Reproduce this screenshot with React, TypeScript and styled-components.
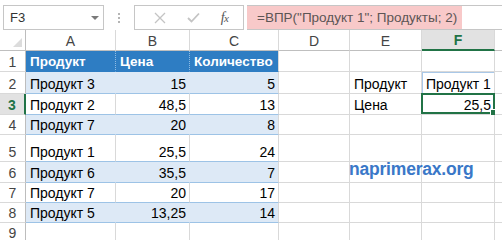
import React from 'react';
import styled, { createGlobalStyle } from 'styled-components';

const GlobalStyle = createGlobalStyle`
  html, body { margin: 0; padding: 0; background: #ffffff; }
  body { font-family: "Liberation Sans", Arial, sans-serif; }
`;

const GREEN = '#217346';
const GRID = '#d9d9d9';
const BAND = '#dde9f6';
const BAND_LINE = '#9dc3e6';
const HEAD_BLUE = '#2e7dc3';

const Page = styled.div`
  width: 502px;
  height: 240px;
  overflow: hidden;
  display: flex;
  flex-direction: column;
  background: #fff;
`;

const Toolbar = styled.div`
  height: 40px;
  box-sizing: border-box;
  padding: 5px 0 0 3px;
  display: flex;
  align-items: flex-start;
`;

const NameBox = styled.div`
  width: 101px;
  height: 25px;
  box-sizing: border-box;
  border: 1px solid #c6c6c6;
  display: flex;
  align-items: center;
  justify-content: space-between;
  padding: 0 4px 0 6px;
  font-size: 13px;
  color: #333;
`;

const DropArrow = styled.span`
  width: 0;
  height: 0;
  border-left: 4px solid transparent;
  border-right: 4px solid transparent;
  border-top: 4px solid #7a7a7a;
`;

const Dots = styled.div`
  margin: 8px 14px 0 14px;
  display: flex;
  flex-direction: column;
  gap: 2px;
`;

const Dot = styled.span`
  width: 2px;
  height: 2px;
  background: #b5b5b5;
`;

const ButtonBox = styled.div`
  width: 110px;
  height: 25px;
  box-sizing: border-box;
  border: 1px solid #c6c6c6;
  display: flex;
  align-items: center;
  justify-content: space-around;
  padding: 0 4px 0 8px;
`;

const FxLabel = styled.span`
  font-family: "Liberation Serif", "Times New Roman", serif;
  font-style: italic;
  font-size: 14px;
  color: #555;
  letter-spacing: -0.5px;
`;

const FxSub = styled.span`
  font-size: 11px;
`;

const FormulaBar = styled.div`
  flex: 1;
  margin-left: 3px;
  height: 25px;
  box-sizing: border-box;
  border-top: 1px solid #c6c6c6;
  border-bottom: 1px solid #c6c6c6;
  display: flex;
`;

const FormulaText = styled.div`
  width: 215px;
  box-sizing: border-box;
  background: #f8c9c9;
  color: #5c5555;
  font-size: 13.5px;
  padding-left: 10px;
  display: flex;
  align-items: center;
  white-space: nowrap;
  overflow: hidden;
`;

const Sheet = styled.div`
  position: relative;
  display: grid;
  grid-template-columns: 26px 90px 74px 89px 71px 72px 73px 1fr;
  grid-template-rows: 21px 21px 22px 21px 20px 27px 21px 20px 20px 20px;
  font-size: 14px;
`;

interface CellProps {
  $bg?: string;
  $align?: 'left' | 'right' | 'center';
  $color?: string;
  $bold?: boolean;
  $rb?: string;
  $bb?: string;
}

const Cell = styled.div<CellProps>`
  box-sizing: border-box;
  position: relative;
  display: flex;
  align-items: flex-end;
  justify-content: ${p => (p.$align === 'right' ? 'flex-end' : p.$align === 'center' ? 'center' : 'flex-start')};
  padding: 0 3px 1px 4px;
  background: ${p => p.$bg ?? '#fff'};
  border-right: ${p => p.$rb ?? `1px solid ${GRID}`};
  border-bottom: ${p => p.$bb ?? `1px solid ${GRID}`};
  color: ${p => p.$color ?? '#000'};
  font-weight: ${p => (p.$bold ? 700 : 400)};
  line-height: 16px;
  white-space: nowrap;
`;

const HeaderCell = styled(Cell)`
  font-size: 13.5px;
`;

const ColHead = styled.div<{ $active?: boolean }>`
  box-sizing: border-box;
  display: flex;
  align-items: center;
  justify-content: center;
  background: ${p => (p.$active ? '#e2e2e2' : '#fff')};
  border-right: 1px solid ${GRID};
  border-bottom: ${p => (p.$active ? `2px solid ${GREEN}` : '1px solid #bfbfbf')};
  color: ${p => (p.$active ? GREEN : '#444')};
  font-weight: ${p => (p.$active ? 700 : 400)};
  padding-top: 1px;
`;

const RowHead = styled.div<{ $active?: boolean }>`
  box-sizing: border-box;
  display: flex;
  align-items: flex-end;
  justify-content: center;
  padding-bottom: 1px;
  line-height: 16px;
  background: ${p => (p.$active ? '#e2e2e2' : '#fff')};
  border-right: ${p => (p.$active ? `2px solid ${GREEN}` : '1px solid #bdbdbd')};
  border-bottom: 1px solid ${GRID};
  color: ${p => (p.$active ? GREEN : '#444')};
  font-weight: ${p => (p.$active ? 700 : 400)};
`;

const Corner = styled.div`
  box-sizing: border-box;
  position: relative;
  border-right: 1px solid #bdbdbd;
  border-bottom: 1px solid #bfbfbf;
  display: flex;
  align-items: flex-end;
  justify-content: flex-end;
  padding: 0 3px 3px 0;
`;

const CornerTriangle = styled.span`
  width: 0;
  height: 0;
  border-left: 9px solid transparent;
  border-bottom: 9px solid #dcdcdc;
`;

const Selection = styled.div`
  position: absolute;
  left: -1px;
  top: -1px;
  right: -1px;
  bottom: 0;
  border: 2px solid ${GREEN};
  pointer-events: none;
`;

const FillHandle = styled.span`
  position: absolute;
  right: -4px;
  bottom: -4px;
  width: 5px;
  height: 5px;
  background: ${GREEN};
  border: 1px solid #fff;
`;

const Watermark = styled.div`
  position: absolute;
  left: 349px;
  top: 129px;
  font-family: "Liberation Sans", Arial, sans-serif;
  font-weight: 700;
  font-size: 17.5px;
  letter-spacing: -0.2px;
  color: #3a78c8;
  white-space: nowrap;
`;

const table: [string, string, string][] = [
  ['Продукт 3', '15', '5'],
  ['Продукт 2', '48,5', '13'],
  ['Продукт 7', '20', '8'],
  ['Продукт 1', '25,5', '24'],
  ['Продукт 6', '35,5', '7'],
  ['Продукт 7', '20', '17'],
  ['Продукт 5', '13,25', '14'],
];

const letters = ['A', 'B', 'C', 'D', 'E', 'F'];
const allCols = ['A', 'B', 'C', 'D', 'E', 'F', 'G'];

const CloseIcon = () => (
  <svg width="12" height="12" viewBox="0 0 12 12">
    <path d="M1 1 L11 11 M11 1 L1 11" stroke="#c4c4c4" strokeWidth="1.3" fill="none" />
  </svg>
);

const CheckIcon = () => (
  <svg width="13" height="11" viewBox="0 0 13 11">
    <path d="M1 6 L4.5 9.5 L12 1.5" stroke="#c4c4c4" strokeWidth="1.8" fill="none" />
  </svg>
);

function sideCells(row: number) {
  const cells: React.ReactNode[] = [];
  const key = (c: string) => `${c}${row}`;
  if (row === 2) {
    cells.push(<Cell key={key('D')} />);
    cells.push(<Cell key={key('E')}>Продукт</Cell>);
    cells.push(
      <Cell key={key('F')} style={{ boxShadow: 'inset 1px 1px 0 #a9c8e8' }}>
        Продукт 1
      </Cell>
    );
    cells.push(<Cell key={key('G')} />);
  } else if (row === 3) {
    cells.push(<Cell key={key('D')} />);
    cells.push(<Cell key={key('E')}>Цена</Cell>);
    cells.push(
      <Cell key={key('F')} $align="right">
        25,5
        <Selection>
          <FillHandle />
        </Selection>
      </Cell>
    );
    cells.push(<Cell key={key('G')} />);
  } else {
    ['D', 'E', 'F', 'G'].forEach(c => cells.push(<Cell key={key(c)} />));
  }
  return cells;
}

export default function App() {
  return (
    <Page>
      <GlobalStyle />
      <Toolbar>
        <NameBox>
          <span>F3</span>
          <DropArrow />
        </NameBox>
        <Dots>
          <Dot />
          <Dot />
          <Dot />
        </Dots>
        <ButtonBox>
          <CloseIcon />
          <CheckIcon />
          <FxLabel>
            f<FxSub>x</FxSub>
          </FxLabel>
        </ButtonBox>
        <FormulaBar>
          <FormulaText>=ВПР("Продукт 1"; Продукты; 2)</FormulaText>
        </FormulaBar>
      </Toolbar>
      <Sheet>
        <Corner>
          <CornerTriangle />
        </Corner>
        {letters.map(l => (
          <ColHead key={l} $active={l === 'F'}>
            {l}
          </ColHead>
        ))}
        <ColHead />

        <RowHead>1</RowHead>
        <HeaderCell $bg={HEAD_BLUE} $color="#fff" $bold $rb="1px dotted #8fbbe3" $bb={`1px solid ${HEAD_BLUE}`}>
          Продукт
        </HeaderCell>
        <HeaderCell $bg={HEAD_BLUE} $color="#fff" $bold $rb="1px dotted #8fbbe3" $bb={`1px solid ${HEAD_BLUE}`}>
          Цена
        </HeaderCell>
        <HeaderCell $bg={HEAD_BLUE} $color="#fff" $bold $bb={`1px solid ${HEAD_BLUE}`}>
          Количество
        </HeaderCell>
        {['D', 'E', 'F', 'G'].map(c => (
          <Cell key={`${c}1`} />
        ))}

        {table.map((r, i) => {
          const rowNo = i + 2;
          const banded = i % 2 === 0;
          const bg = banded ? BAND : '#fff';
          const rb = banded ? `1px solid ${BAND}` : `1px solid ${GRID}`;
          const bb = `1px solid ${BAND_LINE}`;
          return (
            <React.Fragment key={rowNo}>
              <RowHead $active={rowNo === 3}>{rowNo}</RowHead>
              <Cell $bg={bg} $rb={rb} $bb={bb}>
                {r[0]}
              </Cell>
              <Cell $bg={bg} $rb={rb} $bb={bb} $align="right">
                {r[1]}
              </Cell>
              <Cell $bg={bg} $bb={bb} $align="right">
                {r[2]}
              </Cell>
              {sideCells(rowNo)}
            </React.Fragment>
          );
        })}

        <RowHead>9</RowHead>
        {allCols.map(c => (
          <Cell key={`${c}9`} />
        ))}

        <Watermark>naprimerax.org</Watermark>
      </Sheet>
    </Page>
  );
}
